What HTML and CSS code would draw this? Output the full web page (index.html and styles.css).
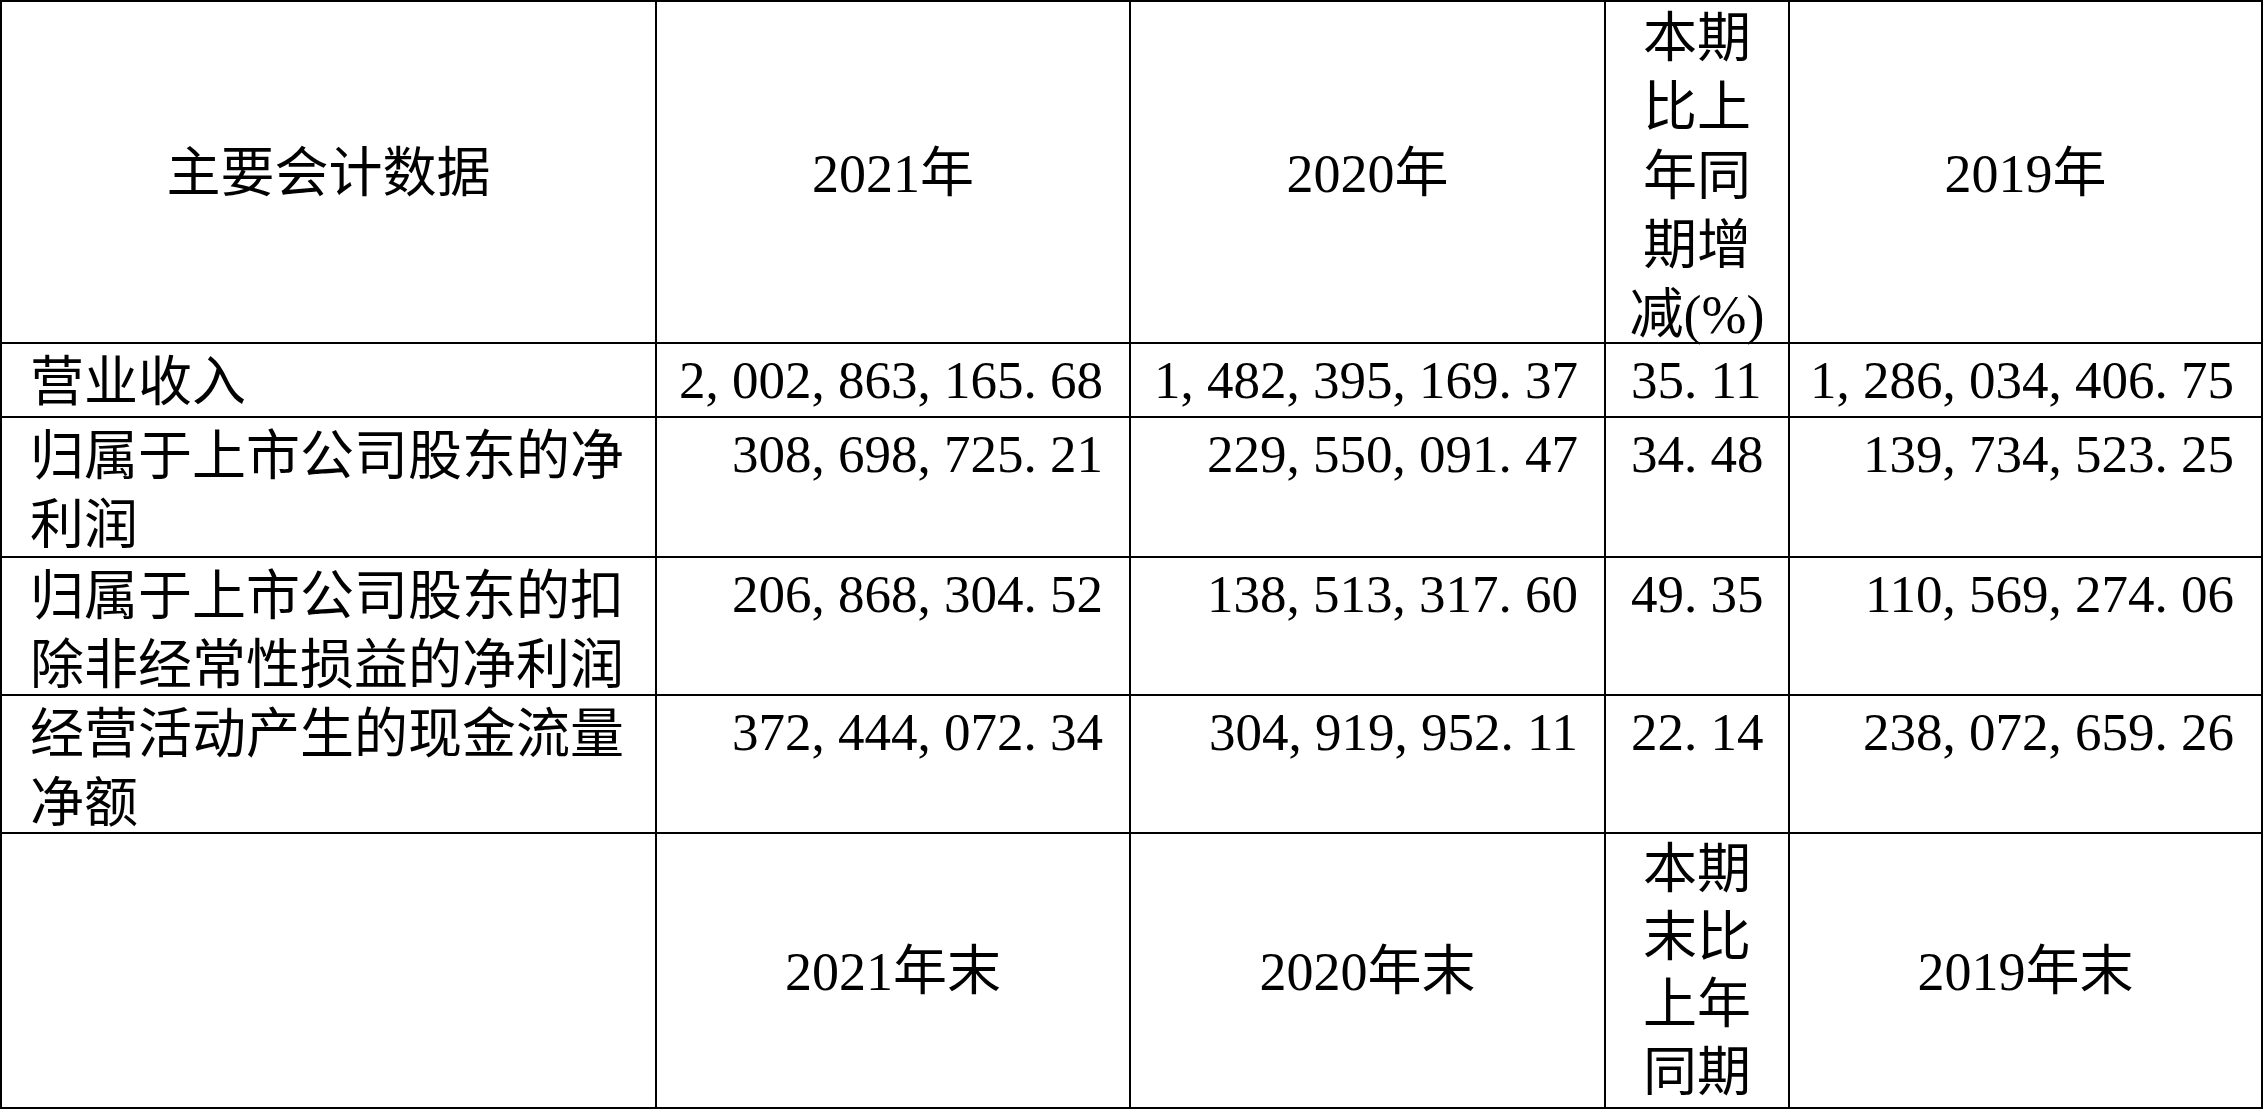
FILE: index.html
```html
<!DOCTYPE html>
<html lang="zh-CN">
<head>
<meta charset="utf-8">
<title>主要会计数据</title>
<link rel="stylesheet" href="styles.css">
</head>
<body>
<div class="sheet">
  <div class="cell head">主要会计数据</div>
  <div class="cell head">2021年</div>
  <div class="cell head">2020年</div>
  <div class="cell head-narrow">本期比上年同期增减(%)</div>
  <div class="cell head last">2019年</div>

  <div class="cell label">营业收入</div>
  <div class="cell num">2<span class="p">,</span>002<span class="p">,</span>863<span class="p">,</span>165<span class="p">.</span>68</div>
  <div class="cell num">1<span class="p">,</span>482<span class="p">,</span>395<span class="p">,</span>169<span class="p">.</span>37</div>
  <div class="cell pct">35<span class="p">.</span>11</div>
  <div class="cell num last">1<span class="p">,</span>286<span class="p">,</span>034<span class="p">,</span>406<span class="p">.</span>75</div>

  <div class="cell label">归属于上市公司股东的净利润</div>
  <div class="cell num">308<span class="p">,</span>698<span class="p">,</span>725<span class="p">.</span>21</div>
  <div class="cell num">229<span class="p">,</span>550<span class="p">,</span>091<span class="p">.</span>47</div>
  <div class="cell pct">34<span class="p">.</span>48</div>
  <div class="cell num last">139<span class="p">,</span>734<span class="p">,</span>523<span class="p">.</span>25</div>

  <div class="cell label">归属于上市公司股东的扣除非经常性损益的净利润</div>
  <div class="cell num">206<span class="p">,</span>868<span class="p">,</span>304<span class="p">.</span>52</div>
  <div class="cell num">138<span class="p">,</span>513<span class="p">,</span>317<span class="p">.</span>60</div>
  <div class="cell pct">49<span class="p">.</span>35</div>
  <div class="cell num last">110<span class="p">,</span>569<span class="p">,</span>274<span class="p">.</span>06</div>

  <div class="cell label">经营活动产生的现金流量净额</div>
  <div class="cell num">372<span class="p">,</span>444<span class="p">,</span>072<span class="p">.</span>34</div>
  <div class="cell num">304<span class="p">,</span>919<span class="p">,</span>952<span class="p">.</span>11</div>
  <div class="cell pct">22<span class="p">.</span>14</div>
  <div class="cell num last">238<span class="p">,</span>072<span class="p">,</span>659<span class="p">.</span>26</div>

  <div class="cell label"></div>
  <div class="cell head">2021年末</div>
  <div class="cell head">2020年末</div>
  <div class="cell head-narrow tail">本期末比上年同期</div>
  <div class="cell head last">2019年末</div>
</div>
</body>
</html>
```

FILE: styles.css
```css
html, body {
  margin: 0;
  padding: 0;
  background: #ffffff;
  overflow: hidden;
}

.sheet {
  width: 2263px;
  height: 1109px;
  box-sizing: border-box;
  border-top: 2px solid #000;
  border-left: 2px solid #000;
  display: grid;
  grid-template-columns: 655px 474px 475px 184px 473px;
  grid-template-rows: 342px 74px 140px 138px 138px 275px;
  font-family: "Liberation Serif", "Noto Sans CJK SC", serif;
  font-size: 54px;
  line-height: 69px;
  color: #000;
}

.cell {
  box-sizing: border-box;
  border-right: 2px solid #000;
  border-bottom: 2px solid #000;
  min-width: 0;
  overflow: visible;
}

.head {
  display: flex;
  align-items: center;
  justify-content: center;
  text-align: center;
  padding: 4px 0 0 0;
}

.head-narrow {
  box-sizing: border-box;
  border-right: 2px solid #000;
  border-bottom: 2px solid #000;
  text-align: center;
  padding: 3px 20px 0 20px;
}

.tail {
  line-height: 67.5px;
  padding-top: 3px;
  overflow: hidden;
}

.label {
  padding: 5px 10px 0 28px;
}

.num {
  text-align: right;
  font-size: 53px;
  padding: 2px 26px 0 0;
  white-space: nowrap;
}

.num.last {
  padding-right: 27px;
}

.pct {
  text-align: left;
  font-size: 53px;
  padding: 2px 0 0 25px;
  white-space: nowrap;
}

.p {
  display: inline-block;
  width: 0.5em;
  text-align: left;
}
```
